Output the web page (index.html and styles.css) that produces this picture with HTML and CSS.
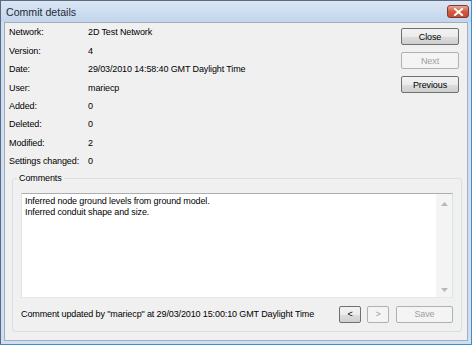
FILE: index.html
```html
<!DOCTYPE html>
<html>
<head>
<meta charset="utf-8">
<link rel="stylesheet" href="styles.css">
</head>
<body>
<div class="window">
  <div class="titlebar">
    <span class="title">Commit details</span>
    <span class="xbtn"><svg width="11" height="8" viewBox="0 0 11 8"><path d="M2 1 L9 7 M9 1 L2 7" stroke="#fff" stroke-width="2" stroke-linecap="square"/></svg></span>
  </div>
  <div class="client">
    <div class="top">
      <div class="info">
        <div class="lbl">Network:</div><div class="val">2D Test Network</div>
        <div class="lbl">Version:</div><div class="val">4</div>
        <div class="lbl">Date:</div><div class="val">29/03/2010 14:58:40 GMT Daylight Time</div>
        <div class="lbl">User:</div><div class="val">mariecp</div>
        <div class="lbl">Added:</div><div class="val">0</div>
        <div class="lbl">Deleted:</div><div class="val">0</div>
        <div class="lbl">Modified:</div><div class="val">2</div>
        <div class="lbl">Settings changed:</div><div class="val">0</div>
      </div>
      <div class="buttons">
        <div class="btn">Close</div>
        <div class="btn disabled">Next</div>
        <div class="btn">Previous</div>
      </div>
    </div>
    <div class="group">
      <div class="legend">Comments</div>
      <div class="textarea">
        <div class="text">Inferred node ground levels from ground model.<br>Inferred conduit shape and size.</div>
        <div class="scroll">
          <svg class="arr" width="7" height="4" viewBox="0 0 7 4"><path d="M0 4 L3.5 0 L7 4 Z" fill="#b8b8b8"/></svg>
          <svg class="arr" width="7" height="4" viewBox="0 0 7 4"><path d="M0 0 L3.5 4 L7 0 Z" fill="#b8b8b8"/></svg>
        </div>
      </div>
      <div class="bottom">
        <div class="status">Comment updated by "mariecp" at 29/03/2010 15:00:10 GMT Daylight Time</div>
        <div class="btn small">&lt;</div>
        <div class="btn small disabled">&gt;</div>
        <div class="btn save disabled">Save</div>
      </div>
    </div>
  </div>
</div>
</body>
</html>
```
FILE: styles.css
```css
html, body {
  margin: 0;
  padding: 0;
}
body {
  width: 472px;
  height: 345px;
  overflow: hidden;
  font-family: "Liberation Sans", sans-serif;
  font-size: 9px;
  letter-spacing: -0.12px;
  color: #000;
}
.window {
  box-sizing: border-box;
  width: 472px;
  height: 345px;
  border: 1px solid #5a6a80;
  border-bottom-color: #3c8fc8;
  border-right-color: #3c8fc8;
  background: #cfdef0;
  display: flex;
  flex-direction: column;
}
.titlebar {
  height: 21px;
  background: linear-gradient(#dae6f4, #c3d5ec);
  display: flex;
  align-items: center;
  justify-content: space-between;
  padding: 0 2px 0 5px;
  flex: none;
}
.title {
  font-size: 10.6px;
  letter-spacing: 0;
  color: #1e2a3a;
}
.xbtn {
  box-sizing: border-box;
  width: 22px;
  height: 13px;
  border: 1px solid #7a3b30;
  border-radius: 3px;
  background: linear-gradient(#e9a99a, #d25a3e 50%, #c94a30);
  display: flex;
  align-items: center;
  justify-content: center;
}
.client {
  flex: 1;
  margin: 0 3px 3px;
  background: #f0f0f0;
  border: 1px solid #a0aebf;
  display: flex;
  flex-direction: column;
}
.top {
  display: flex;
  justify-content: space-between;
}
.info {
  display: grid;
  grid-template-columns: 79px auto;
  grid-auto-rows: 18.45px;
  align-items: center;
  padding: 0 0 0 4px;
}
.lbl, .val {
  white-space: nowrap;
}
.buttons {
  display: flex;
  flex-direction: column;
  gap: 7px;
  padding: 5px 8px 0 0;
}
.btn {
  box-sizing: border-box;
  width: 58px;
  height: 17px;
  border: 1px solid #707070;
  border-radius: 2px;
  background: linear-gradient(#f2f2f2, #ebebeb 50%, #dddddd 51%, #cfcfcf);
  display: flex;
  align-items: center;
  justify-content: center;
  color: #000;
}
.btn.disabled {
  border-color: #adb2b5;
  background: #f4f4f4;
  color: #a0a0a0;
}
.group {
  margin: 7px 5px 8px 7px;
  flex: 1;
  border: 1px solid #d5dfe5;
  border-radius: 3px;
  position: relative;
  display: flex;
  flex-direction: column;
  padding: 14px 8px 0 8px;
}
.legend {
  position: absolute;
  top: -6px;
  left: 4px;
  padding: 0 2px;
  background: #f0f0f0;
}
.textarea {
  height: 105px;
  box-sizing: border-box;
  background: #fff;
  border: 1px solid #abadb3;
  border-left-color: #e2e3ea;
  border-right-color: #dbdfe6;
  border-bottom-color: #e3e9ef;
  display: flex;
}
.text {
  flex: 1;
  padding: 2px 3px;
  line-height: 11px;
}
.scroll {
  width: 16px;
  background: #f4f4f4;
  display: flex;
  flex-direction: column;
  justify-content: space-between;
  align-items: center;
  padding: 8px 0 5px;
}
.bottom {
  display: flex;
  align-items: center;
  gap: 6px;
  margin-top: 8px;
}
.status {
  flex: 1;
  white-space: nowrap;
}
.btn.small {
  width: 22px;
}
.btn.save {
  width: 57px;
  margin-left: 1px;
}
```
